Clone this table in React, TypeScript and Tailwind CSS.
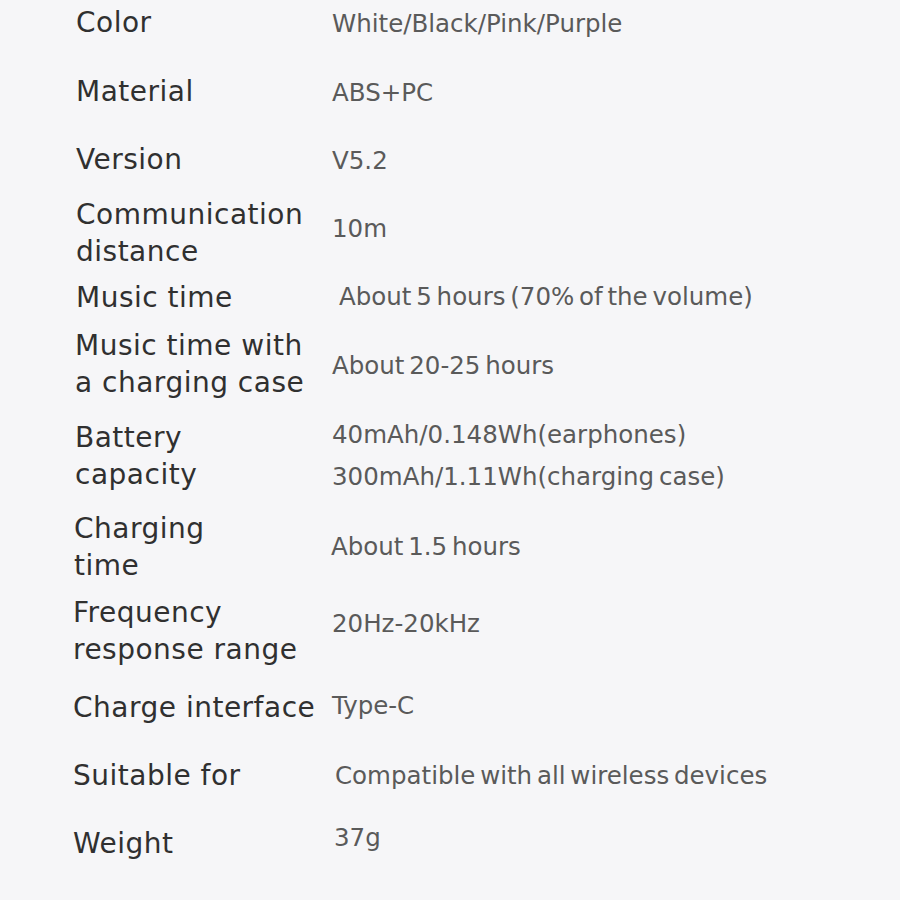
const specs: { label: string[]; value: string[]; h: string; lx: string; vx?: string }[] = [
  { label: ["Color"], value: ["White/Black/Pink/Purple"], h: "h-[68px]", lx: "pl-[3px]", vx: "mt-[4px]" },
  { label: ["Material"], value: ["ABS+PC"], h: "h-[70px]", lx: "pl-[3px]", vx: "mt-[4px]" },
  { label: ["Version"], value: ["V5.2"], h: "h-[66px]", lx: "pl-[3px]", vx: "mt-[4px]" },
  { label: ["Communication", "distance"], value: ["10m"], h: "h-[81px]", lx: "pl-[3px]", vx: "mb-[7px]" },
  { label: ["Music time"], value: ["About 5 hours (70% of the volume)"], h: "h-[48px]", lx: "pl-[3px]", vx: "pl-[7px]" },
  { label: ["Music time with", "a charging case"], value: ["About 20-25 hours"], h: "h-[85px]", lx: "pl-[2px]", vx: "mt-[5px]" },
  {
    label: ["Battery", "capacity"],
    value: ["40mAh/0.148Wh(earphones)", "300mAh/1.11Wh(charging case)"],
    h: "h-[99px]",
    lx: "pl-[2px]",
    vx: "leading-[42px]",
  },
  { label: ["Charging", "time"], value: ["About 1.5 hours"], h: "h-[83px]", lx: "pl-[1px]", vx: "-ml-[1px]" },
  { label: ["Frequency", "response range"], value: ["20Hz-20kHz"], h: "h-[86px]", lx: "pl-0", vx: "mb-[14px]" },
  { label: ["Charge interface"], value: ["Type-C"], h: "h-[66px]", lx: "pl-0", vx: "mb-[2px]" },
  { label: ["Suitable for"], value: ["Compatible with all wireless devices"], h: "h-[70px]", lx: "pl-0", vx: "pl-[3px] mt-[2px]" },
  { label: ["Weight"], value: ["37g"], h: "h-[66px]", lx: "pl-0", vx: "pl-[2px] mb-[10px]" },
];

export default function App() {
  return (
    <div className="h-[900px] w-[900px] overflow-hidden bg-[#f6f6f8] font-['DejaVu_Sans',sans-serif]">
      <div className="-mt-[12px] flex flex-col pl-[73px]">
        {specs.map((s) => (
          <div key={s.label[0]} className={`flex items-center ${s.h}`}>
            <div className={`w-[259px] shrink-0 text-[28px] leading-[37px] tracking-[0.5px] text-[#303030] ${s.lx}`}>
              {s.label.map((l) => (
                <div key={l} className="whitespace-nowrap">{l}</div>
              ))}
            </div>
            <div className={`text-[24.5px] leading-[32px] text-[#5a5a5a] [word-spacing:-3px] ${s.vx ?? ""}`}>
              {s.value.map((v) => (
                <div key={v} className="whitespace-nowrap">{v}</div>
              ))}
            </div>
          </div>
        ))}
      </div>
    </div>
  );
}
